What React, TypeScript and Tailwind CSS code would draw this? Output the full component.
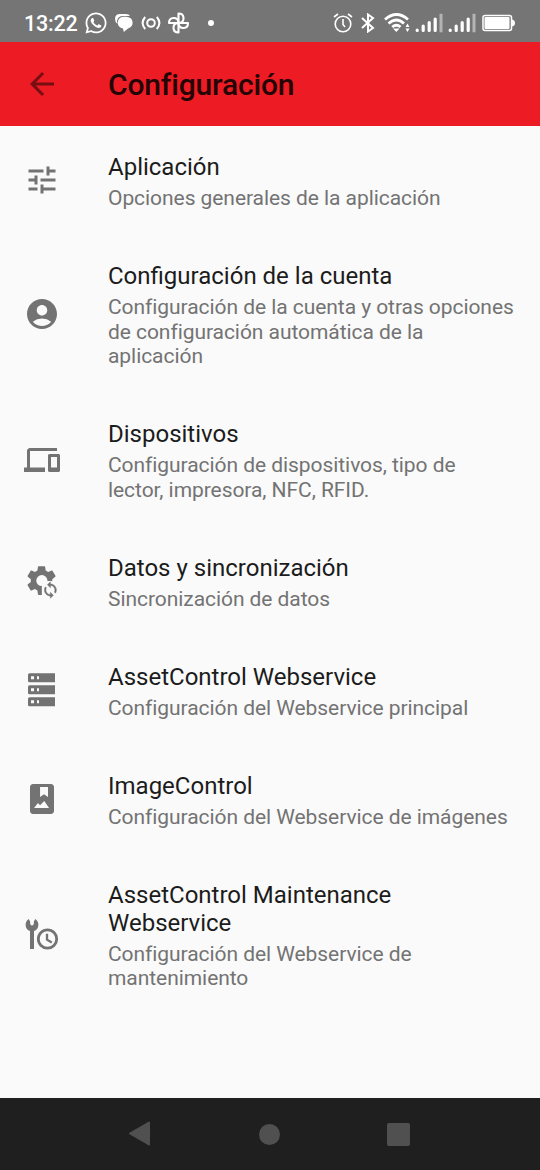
import React from "react";
import { MdTune, MdAccountCircle, MdDevices, MdArrowBack } from "react-icons/md";
import { FaWhatsapp } from "react-icons/fa";

const COG =
  "M19.14 12.94c.04-.3.06-.61.06-.94 0-.32-.02-.64-.07-.94l2.03-1.58c.18-.14.23-.41.12-.61l-1.92-3.32c-.12-.22-.37-.29-.59-.22l-2.39.96c-.5-.38-1.03-.7-1.62-.94l-.36-2.54c-.04-.24-.24-.41-.48-.41h-3.84c-.24 0-.43.17-.47.41l-.36 2.54c-.59.24-1.13.57-1.62.94l-2.39-.96c-.22-.08-.47 0-.59.22L2.74 8.87c-.12.21-.08.47.12.61l2.03 1.58c-.05.3-.09.63-.09.94s.02.64.07.94l-2.03 1.58c-.18.14-.23.41-.12.61l1.92 3.32c.12.22.37.29.59.22l2.39-.96c.5.38 1.03.7 1.62.94l.36 2.54c.05.24.24.41.48.41h3.84c.24 0 .44-.17.47-.41l.36-2.54c.59-.24 1.13-.56 1.62-.94l2.39.96c.22.08.47 0 .59-.22l1.92-3.32c.12-.22.07-.47-.12-.61l-2.01-1.58z";
const SYNC =
  "M12 4V1L8 5l4 4V6c3.31 0 6 2.69 6 6 0 1.01-.25 1.97-.7 2.8l1.46 1.46C19.54 15.03 20 13.57 20 12c0-4.42-3.58-8-8-8zm0 14c-3.31 0-6-2.69-6-6 0-1.01.25-1.97.7-2.8L5.24 7.74C4.46 8.97 4 10.43 4 12c0 4.42 3.58 8 8 8v3l4-4-4-4v3z";

const CogSync = () => (
  <svg width="36" height="36" viewBox="0 0 24 24" fill="currentColor">
    <mask id="cog">
      <rect width="24" height="24" fill="white" />
      <circle cx="12.200" cy="12" r="3.700" fill="black" />
      <path d="M12.200 14L15.500 12.300H24V24H12.200z" fill="black" />
    </mask>
    <path transform="translate(-.3 -.3)" d={COG} mask="url(#cog)" />
    <path transform="translate(11.600 12) scale(.5)" d={SYNC} stroke="currentColor" strokeWidth=".6" />
  </svg>
);

const Servers = () => (
  <svg width="36" height="36" viewBox="0 0 36 36" fill="currentColor" fillRule="evenodd">
    {[1.2, 13.2, 25.2].map((y) => (
      <path
        key={y}
        transform={`translate(4 ${y})`}
        d="M1.500 0H27V9H1.500Q0 9 0 7.500V1.500Q0 0 1.500 0ZM3 3V6H6V3ZM9 3V6H11V3Z"
      />
    ))}
  </svg>
);

const Album = () => (
  <svg width="36" height="36" viewBox="0 0 24 24" fill="currentColor" fillRule="evenodd">
    <path d="M18 2H6c-1.100 0-2 .9-2 2v16c0 1.100.9 2 2 2h12c1.100 0 2-.9 2-2V4c0-1.100-.9-2-2-2zM10.700 4H16v6.700L13.350 8.900L10.700 10.700zM6.700 18L9.300 14.700L10.700 16.200L13.500 13.300L16.700 18z" />
  </svg>
);

const WrenchClock = () => (
  <svg width="36" height="36" viewBox="0 -2.200 36 36" fill="none" stroke="currentColor">
    <path
      fill="currentColor"
      stroke="none"
      d="M4.800 .8L6.200 3.500V6L8 7.500L9.800 6V3.500L11.200 .8A6.800 6.800 0 0 1 10 12.900V30.800H6V12.900A6.800 6.800 0 0 1 4.800 .8Z"
    />
    <circle cx="23.500" cy="20.800" r="9.200" strokeWidth="2.800" />
    <path d="M23 15.500V21.500L27.800 24.200" strokeWidth="2.300" />
  </svg>
);

const rows = [
  { icon: <MdTune size={36} />, title: "Aplicación", lines: ["Opciones generales de la aplicación"] },
  {
    icon: <MdAccountCircle size={36} />,
    title: "Configuración de la cuenta",
    lines: ["Configuración de la cuenta y otras opciones", "de configuración automática de la", "aplicación"],
  },
  {
    icon: <MdDevices size={36} />,
    title: "Dispositivos",
    lines: ["Configuración de dispositivos, tipo de", "lector, impresora, NFC, RFID."],
  },
  { icon: <CogSync />, title: "Datos y sincronización", lines: ["Sincronización de datos"] },
  { icon: <Servers />, title: "AssetControl Webservice", lines: ["Configuración del Webservice principal"] },
  { icon: <Album />, title: "ImageControl", lines: ["Configuración del Webservice de imágenes"] },
  {
    icon: <WrenchClock />,
    title: "AssetControl Maintenance Webservice",
    lines: ["Configuración del Webservice de", "mantenimiento"],
  },
];

const Signal = () => (
  <svg width="28" height="20" viewBox="0 0 28 20" strokeWidth="3.200" strokeLinecap="round" stroke="white">
    <path d="M2.200 17V17.500M8.200 13V17.500M14.200 9.500V17.500M20.200 6V17.500" />
    <path d="M26 .8V19.300" stroke="#b4b4b4" strokeWidth="3" strokeLinecap="butt" />
  </svg>
);

const StatusBar = () => (
  <div className="flex h-[42px] items-center bg-[#757575] pt-1 pl-6 text-white">
    <span className="w-[60px] pt-px text-[21.500px] leading-6 font-medium tracking-[-0.200px]">13:22</span>
    <FaWhatsapp size={24} />
    <svg className="ml-[6px]" width="20" height="20" viewBox="0 0 20 20" fill="white">
      <path d="M1 6Q1 1 6 1H12Q15 1 16 3H9Q4 3 3 8L3.500 11Q1 9 1 6Z" />
      <path d="M9.500 3.800H12.500Q18.600 4.500 18.600 9.800Q18.600 14 14 15.500L9.800 19L9 15.600Q3.800 14.500 3.800 9.500Q4 4.500 9.500 3.800Z" />
    </svg>
    <svg className="ml-[7px]" width="20" height="20" viewBox="0 0 20 20" fill="none" stroke="white" strokeWidth="2">
      <circle cx="10" cy="10" r="3.800" />
      <path d="M4.200 4Q-1 10 4.200 16M15.800 4Q21 10 15.800 16" />
    </svg>
    <svg className="ml-[5px]" width="24" height="24" viewBox="-12.500 -12 24 24" fill="none" stroke="white" strokeWidth="2.100" strokeLinejoin="round">
      {[0, 90, 180, 270].map((a) => (
        <path key={a} transform={`rotate(${a})`} d="M0 0V-9.500C6.500-9.500 6.500-1 1 0" />
      ))}
    </svg>
    <span className="ml-[18px] size-[6px] rounded-full bg-white" />
    <svg className="ml-[119px]" width="20" height="20" viewBox="0 0 20 20" fill="none" stroke="white" strokeWidth="1.600">
      <circle cx="10" cy="11" r="7.800" />
      <path d="M10 6V11.500L12 14M1 4L5 1M19 4L15 1" />
    </svg>
    <svg className="ml-[7px]" width="16" height="20" viewBox="0 0 16 20" fill="none" stroke="white" strokeWidth="2">
      <path d="M2 5L13 15L8 18.500V1.500L13 5L2 15" />
    </svg>
    <svg className="ml-[8px]" width="26" height="20" viewBox="0 0 26 20" fill="none" stroke="white" strokeWidth="2.800">
      <path d="M1 6.500Q12.500-3.500 24 6.500M4.500 10.500Q12.500 3.500 20 10.500M8.200 14Q12.500 10.500 16.500 14" />
      <path d="M9 15.500H15.500L12.300 19ZM21.500 14L23.500 10.500L25.500 14ZM21.500 15.500H25.500L23.500 19Z" fill="white" stroke="none" />
    </svg>
    <div className="ml-[5px] flex gap-[5px]">
      <Signal />
      <Signal />
    </div>
    <svg className="ml-[6px]" width="34" height="18" viewBox="0 0 34 18">
      <rect x="1" y="1.500" width="28.500" height="15" rx="2" fill="none" stroke="white" strokeWidth="1.500" />
      <rect x="2.500" y="3" width="25" height="12" rx="1" fill="white" />
      <path d="M30 5.500Q33 6 33 9Q33 12 30 12.500Z" fill="white" />
    </svg>
  </div>
);

export default function App() {
  return (
    <div className="flex h-[1170px] w-[540px] flex-col overflow-hidden bg-[#fafafa] font-[Roboto,sans-serif]">
      <StatusBar />
      <header className="flex h-[84px] items-center bg-[#ed1c24] pl-6">
        <MdArrowBack size={36} className="text-[#760e12]" />
        <h1 className="ml-12 pt-px text-[30px] font-medium tracking-[-0.170px] text-[#240405]">Configuración</h1>
      </header>
      <main className="flex-1">
        {rows.map((r) => (
          <section key={r.title} className="flex items-center pl-[23.500px] text-[#737373]">
            <div className="w-9 shrink-0">{r.icon}</div>
            <div className="ml-[48.500px] w-[408px] pt-[27.300px] pb-[24.300px]">
              <h2 className="w-[340px] text-[24px] leading-[28.200px] text-[#1c1c1c]">{r.title}</h2>
              <div className="mt-[4.700px] text-[21px] leading-[24.500px] tracking-[-0.060px]">
                {r.lines.map((l) => (
                  <p key={l} className="whitespace-nowrap">{l}</p>
                ))}
              </div>
            </div>
          </section>
        ))}
      </main>
      <nav className="flex h-[72px] items-center bg-[#1f1f1f] pl-[128px] text-[#505050]">
        <svg width="24" height="26" viewBox="0 0 24 26" fill="currentColor" stroke="currentColor" strokeLinejoin="round" strokeWidth="2">
          <path d="M2 12.500L21 1.500V23.500Z" />
        </svg>
        <span className="ml-[107px] size-[21px] rounded-full bg-current" />
        <span className="ml-[107px] size-[23px] rounded-[2px] bg-current" />
      </nav>
    </div>
  );
}
